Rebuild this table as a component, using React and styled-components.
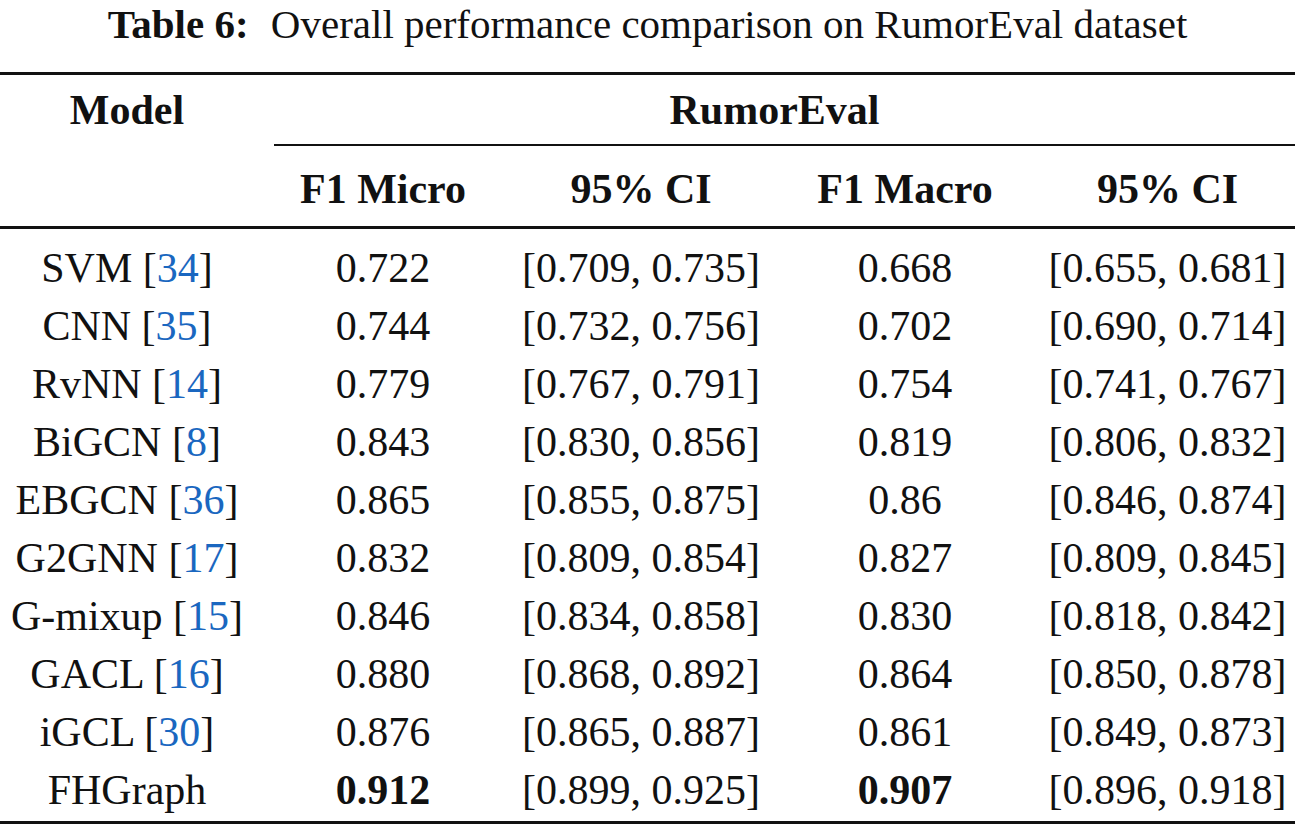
import React from 'react'
import styled, { createGlobalStyle } from 'styled-components';

const GlobalStyle = createGlobalStyle`
    body {
        margin: 0;
        background: #ffffff;
        font-family: 'Liberation Serif', 'Times New Roman', serif;
        color: #111111;
    }
`

const COLUMNS = '254px 258px 258px 270px 255px';

const Page = styled.div`
    width: 1295px;
    height: 827px;
    overflow: hidden;
`

const Caption = styled.div`
    font-size: 41px;
    line-height: normal;
    text-align: center;
    height: 46px;
    margin-bottom: 26px;
    b {
        font-weight: 700;
        margin-right: 12px;
    }
`

const Rule = styled.div`
    height: ${props => props.thick ? '3px' : '2px'};
    background: #111111;
`

const Row = styled.div`
    display: grid;
    grid-template-columns: ${COLUMNS};
    height: ${props => props.h}px;
    padding-top: ${props => props.pt || 0}px;
    box-sizing: border-box;
    align-items: center;
`

const Cell = styled.div`
    text-align: center;
    font-size: 42px;
    line-height: 58px;
    white-space: nowrap;
    font-weight: ${props => props.bold ? 700 : 400};
    grid-column: ${props => props.span || 'auto'};
`

const MidRule = styled.div`
    display: grid;
    grid-template-columns: ${COLUMNS};
    height: 2px;
`

const MidLine = styled.div`
    grid-column: 2 / -1;
    margin-left: 20px;
    background: #111111;
`

const Body = styled.div`
    padding: 10px 0 2px 0;
`

const Cite = styled.span`
    color: #1a67c0;
`

const rows = [
    ['SVM', '34', '0.722', '[0.709, 0.735]', '0.668', '[0.655, 0.681]'],
    ['CNN', '35', '0.744', '[0.732, 0.756]', '0.702', '[0.690, 0.714]'],
    ['RvNN', '14', '0.779', '[0.767, 0.791]', '0.754', '[0.741, 0.767]'],
    ['BiGCN', '8', '0.843', '[0.830, 0.856]', '0.819', '[0.806, 0.832]'],
    ['EBGCN', '36', '0.865', '[0.855, 0.875]', '0.86', '[0.846, 0.874]'],
    ['G2GNN', '17', '0.832', '[0.809, 0.854]', '0.827', '[0.809, 0.845]'],
    ['G-mixup', '15', '0.846', '[0.834, 0.858]', '0.830', '[0.818, 0.842]'],
    ['GACL', '16', '0.880', '[0.868, 0.892]', '0.864', '[0.850, 0.878]'],
    ['iGCL', '30', '0.876', '[0.865, 0.887]', '0.861', '[0.849, 0.873]'],
    ['FHGraph', null, '0.912', '[0.899, 0.925]', '0.907', '[0.896, 0.918]'],
]

const App = () => {
  return(
    <Page>
        <GlobalStyle/>
        <Caption><b>Table 6:</b> Overall performance comparison on RumorEval dataset</Caption>
        <Rule thick/>
        <Row h={69}>
            <Cell bold>Model</Cell>
            <Cell bold span="2 / -1">RumorEval</Cell>
        </Row>
        <MidRule><MidLine/></MidRule>
        <Row h={80} pt={6}>
            <Cell/>
            <Cell bold>F1 Micro</Cell>
            <Cell bold>95% CI</Cell>
            <Cell bold>F1 Macro</Cell>
            <Cell bold>95% CI</Cell>
        </Row>
        <Rule thick/>
        <Body>
            {rows.map((r) => {
                const best = r[0] === 'FHGraph'
                return (
                    <Row h={58} key={r[0]}>
                        <Cell>{r[0]}{r[1] ? <> [<Cite>{r[1]}</Cite>]</> : null}</Cell>
                        <Cell bold={best}>{r[2]}</Cell>
                        <Cell>{r[3]}</Cell>
                        <Cell bold={best}>{r[4]}</Cell>
                        <Cell>{r[5]}</Cell>
                    </Row>
                )
            })}
        </Body>
        <Rule thick/>
    </Page>
  )
}
export default App;
